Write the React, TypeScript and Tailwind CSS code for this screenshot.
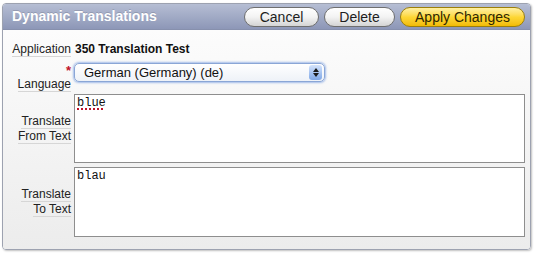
import * as React from 'react';

function PillButton({ label, width, primary }: { label: string; width: string; primary?: boolean }) {
  const tone = primary
    ? 'border-[#9c7f0c] bg-gradient-to-b from-[#fff0a0] via-[#fdd735] to-[#f2bb00] text-[#2e2600]'
    : 'border-[#6f6f6f] bg-gradient-to-b from-[#ffffff] via-[#f3f3f3] to-[#d4d4d4] text-[#1e1e1e]';
  return (
    <button
      className={`flex h-[20px] items-center justify-center rounded-full border text-[14px] leading-[18px] ${width} ${tone}`}
    >
      {label}
    </button>
  );
}

function Label({ lines, required }: { lines: string[]; required?: boolean }) {
  return (
    <div className="flex w-[68px] shrink-0 flex-col items-end text-right text-[12px] leading-[14px] text-[#222]">
      {required && <span className="h-[12px] text-[13px] font-bold leading-[12px] text-[#c0122a]">*</span>}
      {lines.map((t) => (
        <span key={t} className="h-[15px] border-b border-[#d6d6d6] leading-[14px]">
          {t}
        </span>
      ))}
    </div>
  );
}

export default function App() {
  return (
    <div className="h-[255px] w-[535px] bg-white pt-[3px] pl-[2px] font-['Liberation_Sans',Arial,sans-serif]">
      <div className="flex h-[247px] w-[529px] flex-col overflow-hidden rounded-[4px] border border-[#9da2b0] shadow-[1px_1px_2px_rgba(0,0,0,0.25)]">
        <div className="flex h-[26px] shrink-0 items-center justify-between border-b border-[#8790ad] bg-gradient-to-b from-[#b6bed4] to-[#8d97b7] pl-[9px] pr-[5px]">
          <h1 className="text-[14px] font-bold text-white [text-shadow:0_-1px_0_rgba(0,0,0,0.15)]">Dynamic Translations</h1>
          <div className="flex gap-[5px]">
            <PillButton label="Cancel" width="w-[75px]" />
            <PillButton label="Delete" width="w-[71px]" />
            <PillButton label="Apply Changes" width="w-[125px]" primary />
          </div>
        </div>
        <div className="flex flex-1 flex-col bg-gradient-to-b from-[#fcfcfc] to-[#ececec] pt-[12px] pr-[5px]">
          <div className="flex items-start gap-[4px]">
            <Label lines={['Application']} />
            <span className="text-[12px] font-bold leading-[14px] text-[#111]">350 Translation Test</span>
          </div>
          <div className="mt-[6px] flex items-end gap-[3px]">
            <Label lines={['Language']} required />
            <div className="mb-[10px] flex h-[19px] w-[251px] items-center justify-between rounded-[5px] border border-[#8aa6d6] bg-gradient-to-b from-white to-[#eef2f8] pl-[9px] pr-[2px] shadow-[0_0_2px_1px_rgba(94,140,220,0.55)]">
              <span className="text-[13px] text-[#111]">German (Germany) (de)</span>
              <span className="flex h-[15px] w-[13px] flex-col items-center justify-center gap-[1px] rounded-[3px] bg-gradient-to-b from-[#d4e3fb] to-[#7fa7e6]">
                <svg width="6" height="4" viewBox="0 0 6 4"><path d="M3 0 L6 4 L0 4 Z" fill="#1a1a1a" /></svg>
                <svg width="6" height="4" viewBox="0 0 6 4"><path d="M0 0 L6 0 L3 4 Z" fill="#1a1a1a" /></svg>
              </span>
            </div>
          </div>
          <div className="mt-[2px] flex items-center gap-[3px]">
            <Label lines={['Translate', 'From Text']} />
            <div className="h-[69px] flex-1 border border-[#8e8e8e] bg-white px-[2px] py-[1px] font-['Liberation_Mono',monospace] text-[12px] leading-[14px] text-[#111]">
              <span className="underline decoration-[#c0122a] decoration-dotted decoration-2 underline-offset-[2px]">blue</span>
            </div>
          </div>
          <div className="mt-[4px] flex items-center gap-[3px]">
            <Label lines={['Translate', 'To Text']} />
            <div className="h-[70px] flex-1 border border-[#8e8e8e] bg-white px-[2px] py-[1px] font-['Liberation_Mono',monospace] text-[12px] leading-[14px] text-[#111]">
              blau
            </div>
          </div>
        </div>
      </div>
    </div>
  );
}
